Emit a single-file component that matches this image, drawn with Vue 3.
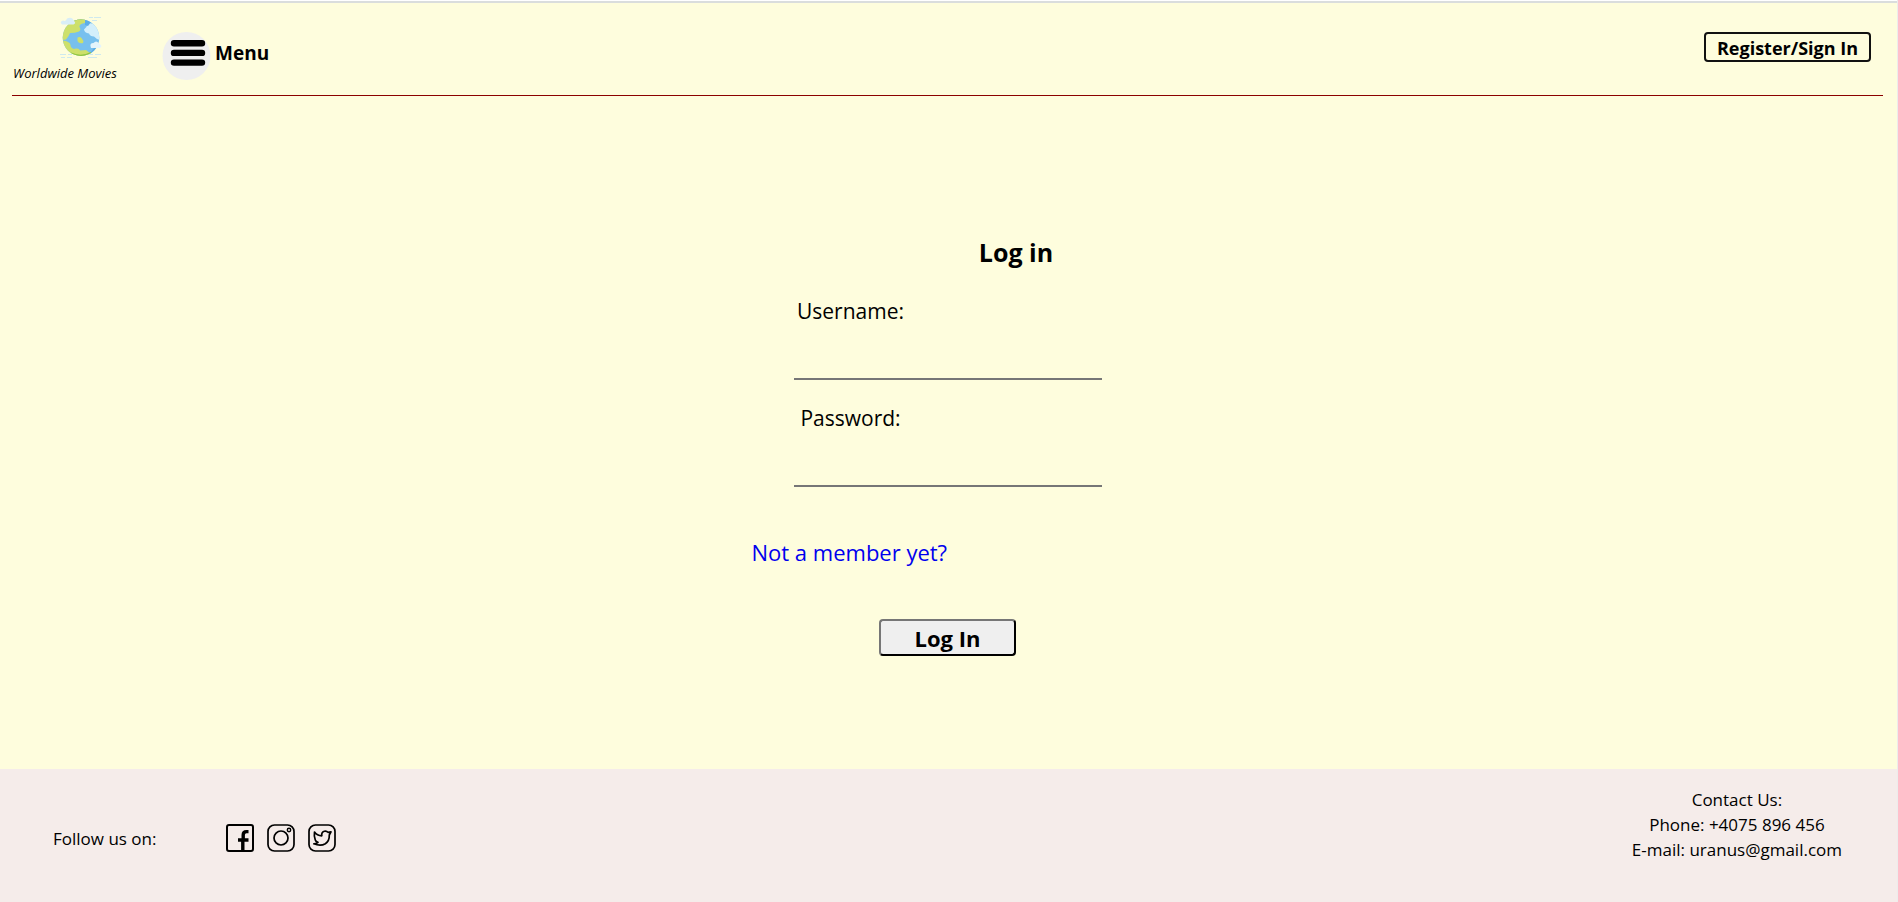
<script setup>
import { ref } from 'vue'

const username = ref('')
const password = ref('')
</script>

<template>
  <div class="page">
    <header class="header">
      <a class="brand" href="#">
        <svg class="globe" viewBox="0 0 44 44" aria-hidden="true">
          <defs>
            <clipPath id="globe-disc"><circle cx="22" cy="22.7" r="18.3" /></clipPath>
          </defs>
          <g clip-path="url(#globe-disc)">
            <rect width="44" height="44" fill="#77c0ee" />
            <path d="M2 2H27L26 8Q20 9 20.5 12Q22.5 15 20 16.5Q16 18 11 18Q10 21 7 24.5L2 25Z" fill="#cde06a" />
            <path d="M2 26Q6 25 9 27Q12 28 11.5 31Q13 35 17 33.5Q20 33 21 35.5Q25 35 27 35L32 39L28 44H8Z" fill="#cde06a" />
            <path d="M18.5 22.5Q21 21.5 22.5 23Q25 25.5 24 28Q20 29 18.5 26Z" fill="#cde06a" />
            <path d="M29 8L36 9L42 18V25Q38 25 35 21.5Q31 21.5 30 18.5Q25.5 18 25 14.5Q28 12 29 8Z" fill="#d3effb" />
            <path d="M26 4L32 7L29 11L26 10Z" fill="#5eaee6" />
            <path d="M35 33L42 29L36 38L31 38Z" fill="#5eaee6" />
            <path d="M12 37.5Q22 42 32 37L32 42H14Z" fill="#8fc543" />
            <path d="M14 6Q20 4 28 5L28 3H14Z" fill="#8fc543" />
          </g>
          <path d="M3 9.5H14.5Q17.5 8 15 6Q13 1 8 3.5Q7 7 4 5.5Q0 7 3 9.5Z" fill="#d9eef7" />
          <path d="M32 33H41Q44 31 40.5 29Q37.5 24.5 34.5 28Q30 28 32 33Z" fill="#e4f4fb" />
          <path d="M30 2.5H34M35 2.5H42M33 5.5H38M1 39.5H7M9 39.5H13M2 42.5H6M8 42.5H13M30 39.5H34M36 39.5H42M29 42.5H38" stroke="#cfe9ee" stroke-width="1" />
        </svg>
        <span class="brand-name">Worldwide Movies</span>
      </a>

      <button class="menu" type="button">
        <svg class="menu-icon" viewBox="0 0 49 49" aria-hidden="true">
          <circle cx="24.5" cy="24" r="24" fill="#efefef" />
          <path d="M12 11.2H40M12 20.9H40M12 30.6H40" stroke="#000" stroke-width="6.4" stroke-linecap="round" />
        </svg>
        <span class="menu-label">Menu</span>
      </button>

      <button class="register" type="button">Register/Sign In</button>
    </header>

    <main class="main">
      <form class="login" @submit.prevent>
        <h1 class="title">Log in</h1>
        <div class="field">
          <label for="username">Username:</label>
          <input id="username" v-model="username" type="text" autocomplete="username" />
        </div>
        <div class="field">
          <label for="password">Password:</label>
          <input id="password" v-model="password" type="password" autocomplete="current-password" />
        </div>
        <a class="signup" href="#">Not a member yet?</a>
        <button class="submit" type="submit">Log In</button>
      </form>
    </main>

    <footer class="footer">
      <div class="follow">
        <span>Follow us on:</span>
        <nav class="social" aria-label="Social media">
          <a href="#" aria-label="Facebook">
            <svg viewBox="0 0 28 28" aria-hidden="true">
              <rect x="1" y="1" width="26" height="26" rx="2" fill="none" stroke="#000" stroke-width="2" />
              <path d="M16.8 27V16.5M12 16H22.5M22.5 7.6H20.5Q17.2 7.6 17.2 11V16" fill="none" stroke="#000" stroke-width="3.4" />
            </svg>
          </a>
          <a href="#" aria-label="Instagram">
            <svg viewBox="0 0 28 28" aria-hidden="true" fill="none" stroke="#000" stroke-width="1.7">
              <rect x="1" y="1" width="26" height="26" rx="6.5" />
              <circle cx="14" cy="14" r="7" />
              <circle cx="22" cy="6" r="1.7" stroke-width="1.4" />
            </svg>
          </a>
          <a href="#" aria-label="Twitter">
            <svg viewBox="0 0 28 28" aria-hidden="true" fill="none" stroke="#000" stroke-width="1.7" stroke-linejoin="round">
              <rect x="1" y="1" width="26" height="26" rx="6.5" />
              <path d="M6.5 8Q9 11.5 13.8 11.8Q13.2 8.2 16.3 7.2Q18.5 6.6 20 8.3L23 7.8L21.3 11Q21.5 17 17.3 19.8Q12.5 22.6 5.8 19.8Q8.5 19.8 10 18.4Q7.8 17.8 7.3 16Q5.8 12 6.5 8Z" />
            </svg>
          </a>
        </nav>
      </div>

      <address class="contact">
        <span>Contact Us:</span>
        <span>Phone: +4075 896 456</span>
        <span>E-mail: uranus@gmail.com</span>
      </address>
    </footer>
  </div>
</template>

<style>
body {
  margin: 0;
}
</style>

<style scoped>
.page {
  box-sizing: border-box;
  display: flex;
  flex-direction: column;
  min-height: 100vh;
  border-right: 1px solid #ececec;
  background: #fefddd;
  color: #000;
  font-family: "Comic Sans MS", "Comic Sans", "Open Sans", sans-serif;
}

.page::before {
  content: "";
  height: 1px;
  border-bottom: 2px solid #dadddd;
  background: #fff;
}

button,
input {
  box-sizing: border-box;
  color: inherit;
  font-family: inherit;
}

button {
  cursor: pointer;
}

.header {
  display: flex;
  align-items: flex-start;
  margin: 0 14px 0 12px;
  padding: 12px 0;
  border-bottom: 1px solid #8b0000;
}

.brand {
  display: flex;
  flex-direction: column;
  align-items: center;
  gap: 4px;
  width: 106px;
  color: inherit;
  text-decoration: none;
}

.globe {
  width: 44px;
  height: 44px;
  padding-left: 32px;
}

.brand-name {
  font-size: 13px;
  font-style: italic;
  line-height: 20px;
  white-space: nowrap;
}

.menu {
  display: flex;
  align-items: flex-start;
  gap: 4px;
  margin: 17px 0 0 44px;
  padding: 0;
  border: 0;
  background: none;
  font-size: 19px;
  font-weight: 700;
}

.menu-icon {
  width: 49px;
  height: 49px;
}

.menu-label {
  line-height: 42px;
}

.register {
  min-width: 167px;
  margin: 17px 12px 0 auto;
  padding: 2px 4px 0;
  border: 2px solid #111;
  border-radius: 4px;
  background: none;
  font-size: 18px;
  font-weight: 700;
  line-height: 24px;
}

.main {
  display: flex;
  flex: 1;
  flex-direction: column;
  align-items: center;
  justify-content: center;
  margin: 0 14px 0 12px;
  padding-top: 25px;
}

.login {
  display: flex;
  flex-direction: column;
  align-items: center;
  width: 392px;
}

.title {
  margin: 0 0 25px;
  padding-left: 137px;
  font-size: 25px;
  line-height: 36px;
}

.field {
  display: flex;
  flex-direction: column;
  width: 308px;
  margin-bottom: 22px;
}

.field label {
  align-self: flex-start;
  min-width: 114px;
  font-size: 21px;
  line-height: 32px;
  text-align: center;
}

.field input {
  width: 100%;
  height: 53px;
  padding: 0 4px;
  border: 0;
  border-bottom: 2px solid #767676;
  outline: 0;
  background: transparent;
  font-size: 21px;
}

.signup {
  align-self: flex-start;
  margin: 27px 0 51px;
  color: #0000ee;
  font-size: 22px;
  line-height: 32px;
  text-decoration: none;
}

.submit {
  width: 137px;
  height: 37px;
  padding: 0;
  border: 2px outset #767676;
  border-color: #767676 #212121 #212121 #767676;
  border-radius: 4px;
  background: #efefef;
  font-size: 22px;
  font-weight: 700;
  line-height: 32px;
}

.footer {
  display: flex;
  align-items: flex-end;
  justify-content: space-between;
  padding: 18px 55px 40px 53px;
  background: #f5ecea;
  font-size: 17px;
  line-height: 25px;
}

.follow {
  display: flex;
  align-items: center;
  gap: 70px;
  padding-bottom: 10px;
}

.social {
  display: flex;
  gap: 13px;
}

.social a {
  display: block;
  height: 28px;
}

.social svg {
  width: 28px;
  height: 28px;
}

.contact {
  display: flex;
  flex-direction: column;
  align-items: center;
  font-style: normal;
}
</style>
